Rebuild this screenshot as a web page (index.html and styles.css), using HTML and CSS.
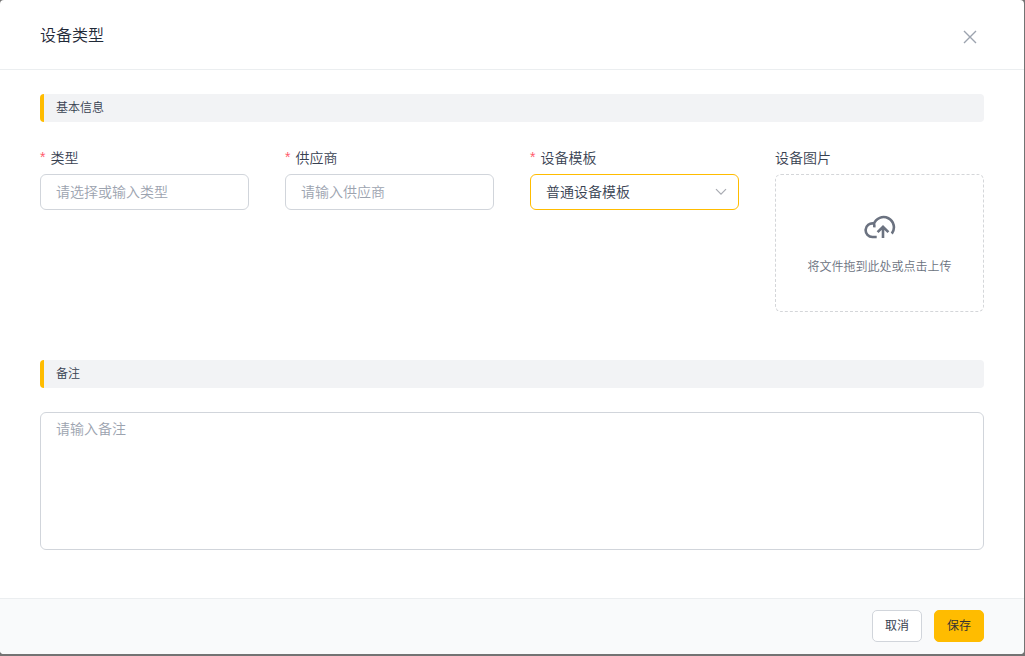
FILE: index.html
```html
<!DOCTYPE html>
<html lang="zh-CN">
<head>
<meta charset="utf-8">
<meta name="viewport" content="width=device-width, initial-scale=1">
<title>设备类型</title>
<link rel="stylesheet" href="styles.css">
</head>
<body>
<form class="dialog" role="dialog" aria-labelledby="dialog-title">
  <header class="dialog-header">
    <h1 class="dialog-title" id="dialog-title">设备类型</h1>
    <button class="close" type="button" aria-label="关闭">
      <svg width="14" height="14" viewBox="0 0 14 14" fill="none" stroke="currentColor" stroke-width="1.4"><path d="M1 1l12 12M13 1L1 13"/></svg>
    </button>
  </header>

  <main class="dialog-body">
    <section class="section">
      <h2 class="section-title">基本信息</h2>
      <div class="fields">
        <div class="field">
          <label class="label required" for="type">类型</label>
          <input class="control" id="type" type="text" placeholder="请选择或输入类型">
        </div>
        <div class="field">
          <label class="label required" for="supplier">供应商</label>
          <input class="control" id="supplier" type="text" placeholder="请输入供应商">
        </div>
        <div class="field">
          <label class="label required" for="template">设备模板</label>
          <div class="select-wrap">
            <select class="control select" id="template"><option>普通设备模板</option></select>
            <svg class="chevron" width="12" height="8" viewBox="0 0 12 8" fill="none" stroke="currentColor" stroke-width="1.2"><path d="M1 1.2l5 5 5-5"/></svg>
          </div>
        </div>
        <div class="field">
          <span class="label" id="image-label">设备图片</span>
          <button class="upload" type="button" aria-describedby="image-label">
            <svg class="upload-icon" width="32" height="24" viewBox="0 0 32 24" fill="none" stroke="currentColor" stroke-width="2.6"><path d="M12.7 22H8.5A6.8 6.8 0 1 1 9.6 8.5Q10.7 8.8 10.2 12.4M9.8 9.2A10.3 10.3 0 1 1 27.8 18.6M19 23V12.4M13.6 17.2L19 11.8l5.4 5.4"/></svg>
            <span class="upload-text">将文件拖到此处或点击上传</span>
          </button>
        </div>
      </div>
    </section>

    <section class="section">
      <h2 class="section-title" id="remark-title">备注</h2>
      <textarea class="control remark" aria-labelledby="remark-title" placeholder="请输入备注"></textarea>
    </section>
  </main>

  <footer class="dialog-footer">
    <button class="button" type="button">取消</button>
    <button class="button primary" type="submit">保存</button>
  </footer>
</form>
</body>
</html>
```
FILE: styles.css
```css
* {
  box-sizing: border-box;
}

body {
  margin: 0;
  min-height: 100vh;
  display: flex;
  padding: 0 1px 2px 0;
  background: #737373;
  color: #374151;
  font-family: "Noto Sans CJK SC", sans-serif;
  font-size: 14px;
  line-height: 24px;
}

button,
input,
select,
textarea {
  margin: 0;
  font: inherit;
  color: inherit;
}

button {
  cursor: pointer;
}

svg {
  display: block;
}

.dialog {
  flex: 1;
  min-width: 0;
  display: flex;
  flex-direction: column;
  border-radius: 4px;
  background: #fff;
  overflow: hidden;
}

.dialog-header {
  display: flex;
  align-items: center;
  justify-content: space-between;
  padding: 22px 40px 23px;
  border-bottom: 1px solid #ebeef0;
}

.dialog-title {
  margin: 0;
  color: #1f2937;
  font-size: 16px;
  font-weight: 350;
  line-height: 24px;
}

.close {
  padding: 6px 7px 0;
  border: 0;
  background: none;
  color: #9ca3af;
}

.dialog-body {
  flex: 1;
  display: flex;
  flex-direction: column;
  gap: 48px;
  padding: 24px 40px 48px;
}

.section {
  display: flex;
  flex-direction: column;
  gap: 24px;
}

.section-title {
  margin: 0;
  padding: 0 12px 2px;
  border-left: 4px solid #ffbc00;
  border-radius: 4px;
  background: #f2f3f5;
  font-size: 12px;
  font-weight: 350;
  line-height: 26px;
}

.fields {
  display: grid;
  grid-template-columns: repeat(4, minmax(0, 1fr));
  gap: 36px;
}

.field {
  display: flex;
  flex-direction: column;
  gap: 6px;
}

.label {
  display: flex;
  font-weight: 350;
  line-height: 22px;
}

.required::before {
  content: "*";
  margin-right: 5px;
  color: #ff5c6c;
  font-family: "Liberation Sans", sans-serif;
}

.control {
  width: 100%;
  height: 36px;
  padding: 0 15px 2px;
  border: 1px solid #d1d5db;
  border-radius: 6px;
  outline: 0;
  background: #fff;
  font-weight: 350;
}

.control::placeholder {
  color: #9ca3af;
}

.control:focus,
.select {
  border-color: #ffbc00;
}

.select-wrap {
  position: relative;
}

.select {
  display: block;
  appearance: none;
}

.chevron {
  position: absolute;
  top: 14px;
  right: 12px;
  color: #a8abb2;
  pointer-events: none;
}

.upload {
  display: flex;
  flex-direction: column;
  align-items: center;
  gap: 16px;
  padding: 40px 12px 34px;
  border: 1px dashed #d4d6d9;
  border-radius: 6px;
  background: #fff;
  color: #6b7280;
}

.upload-text {
  font-size: 12px;
  font-weight: 350;
  line-height: 22px;
}

.remark {
  display: block;
  height: 138px;
  padding: 4px 15px;
  line-height: 22px;
  resize: none;
}

.dialog-footer {
  display: flex;
  justify-content: flex-end;
  gap: 12px;
  padding: 11px 40px 12px;
  border-top: 1px solid #ebeef0;
  background: #f9fafb;
}

.button {
  padding: 0 12px 2px;
  border: 1px solid #d1d5db;
  border-radius: 5px;
  background: #fff;
  font-size: 12px;
  line-height: 28px;
}

.primary {
  border-color: #ffbc00;
  background: #ffbc00;
  color: #333;
}
```
